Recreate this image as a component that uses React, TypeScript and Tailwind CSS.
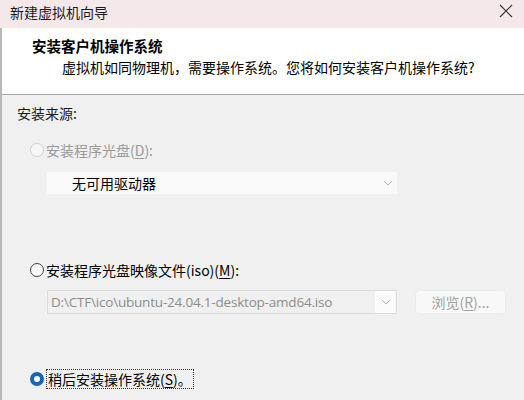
const Chevron = () => (
  <svg width="10" height="6" viewBox="0 0 10 6" className="shrink-0">
    <path d="M1 1 L5 5 L9 1" fill="none" stroke="#b4b4b4" strokeWidth="1" />
  </svg>
);

export default function App() {
  return (
    <div className="w-[524px] h-[400px] overflow-hidden flex flex-col bg-[#f0f0f0] text-[14px] text-[#1a1a1a] font-['Microsoft_YaHei','Noto_Sans_CJK_SC',sans-serif]">
      {/* title bar */}
      <div className="h-[28px] shrink-0 flex items-center justify-between pl-[10px] pr-[10px] bg-[#f4e8ea]">
        <span className="leading-[20px] -mt-[5px] text-[#1a1a1a]">新建虚拟机向导</span>
        <svg width="14" height="14" viewBox="0 0 14 14" className="-mt-[6px] mr-[1px]">
          <path d="M1 1 L13 13 M13 1 L1 13" stroke="#333" strokeWidth="1.1" />
        </svg>
      </div>

      <div className="flex-1 flex flex-col border-l-2 border-[#b8b8b8]">
        {/* header */}
        <div className="h-[67px] shrink-0 bg-white border-b border-[#a8a8a8] pt-[8px] pl-[30px]">
          <div className="leading-[20px] font-bold text-[14.5px] text-black">安装客户机操作系统</div>
          <div className="leading-[20px] mt-[1px] pl-[30px] text-black">
            虚拟机如同物理机，需要操作系统。您将如何安装客户机操作系统?
          </div>
        </div>

        {/* body */}
        <div className="flex-1 pt-[8px] pl-[15px]">
          <div className="leading-[20px]">安装来源:</div>

          <div className="mt-[17px] ml-[13px] flex items-center gap-[2px] h-[20px]">
            <span className="w-[14px] h-[14px] rounded-full border border-[#cfcfcf] bg-[#f7f7f7]" />
            <span className="text-[#9a9a9a] leading-[20px]">
              安装程序光盘(<span className="underline underline-offset-2">D</span>):
            </span>
          </div>

          <div className="mt-[12px] ml-[30px] w-[350px] h-[22px] bg-[#f9f9f9] flex items-center justify-between pl-[25px] pr-[4px]">
            <span className="leading-[20px] text-black">无可用驱动器</span>
            <Chevron />
          </div>

          <div className="mt-[66px] ml-[13px] flex items-center gap-[2px] h-[20px]">
            <span className="w-[14px] h-[14px] rounded-full border border-[#404040] bg-[#f7f7f7]" />
            <span className="leading-[20px] text-black">
              安装程序光盘映像文件(iso)(<span className="underline underline-offset-2">M</span>):
            </span>
          </div>

          <div className="mt-[10px] ml-[30px] flex items-center">
            <div className="w-[350px] h-[24px] border border-[#dcdcdc] bg-[#fbfbfb] flex items-center">
              <div className="flex-1 h-full bg-[#f0f0f0] flex items-center pl-[3px] text-[#8c8c8c] font-['Open_Sans','Noto_Sans_CJK_SC',sans-serif] text-[13.5px] tracking-[-0.2px]">
                D:\CTF\ico\ubuntu-24.04.1-desktop-amd64.iso
              </div>
              <div className="w-[21px] h-full flex items-center justify-center">
                <Chevron />
              </div>
            </div>
            <div className="ml-[18px] w-[91px] h-[24px] rounded-[4px] bg-[#f8f8f8] border border-[#ebebeb] flex items-center justify-center text-[#a0a0a0]">
              浏览(<span className="underline underline-offset-2">R</span>)...
            </div>
          </div>

          <div className="mt-[55px] ml-[13px] flex items-center gap-[2px] h-[20px]">
            <span className="w-[14px] h-[14px] rounded-full border-[4px] border-[#1565b8] bg-white" />
            <span className="leading-[18px] px-[1px] border border-dotted border-[#333] text-black">
              稍后安装操作系统(<span className="underline underline-offset-2">S</span>)。
            </span>
          </div>
        </div>
      </div>
    </div>
  );
}
